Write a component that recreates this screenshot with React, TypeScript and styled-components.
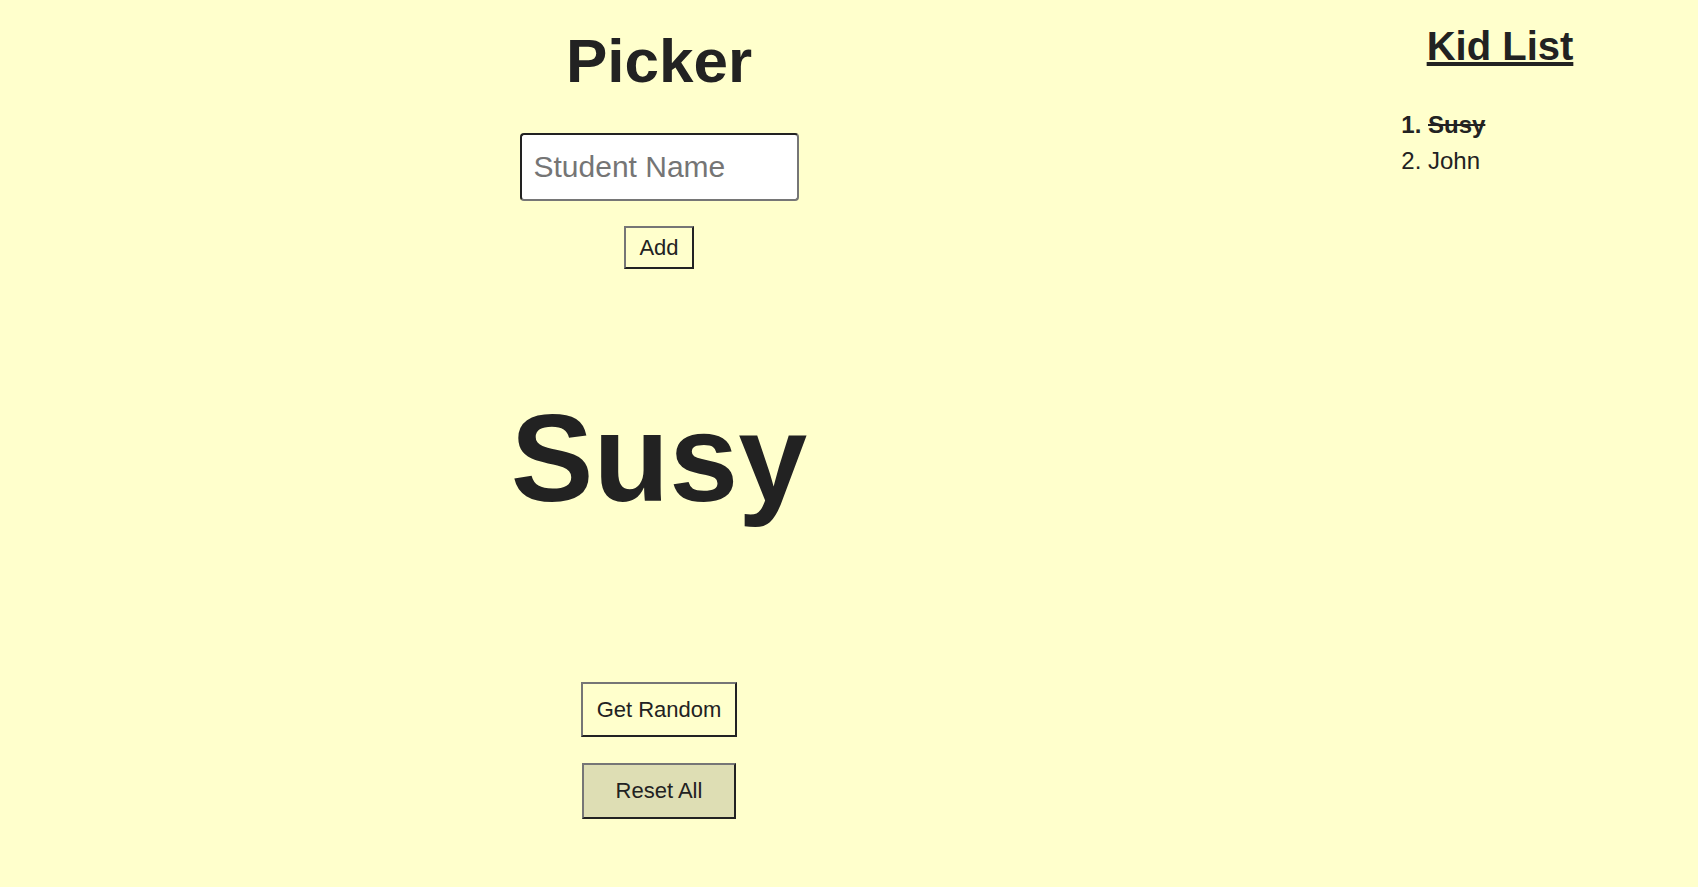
import React, { useState } from 'react';
import styled, { createGlobalStyle, css } from 'styled-components';

const GlobalStyle = createGlobalStyle`
  body {
    margin: 0;
    background: #ffffcc;
    color: #222222;
    font-family: 'Liberation Sans', Arial, sans-serif;
  }
`;

type Kid = { name: string; picked: boolean };

export default function App() {
  const [kids] = useState<Kid[]>([
    { name: 'Susy', picked: true },
    { name: 'John', picked: false },
  ]);
  const current = kids.find((k) => k.picked);

  return (
    <>
      <GlobalStyle />
      <Page>
        <PickerColumn>
          <Title>Picker</Title>
          <NameInput placeholder="Student Name" />
          <Button $size="small">Add</Button>
          <PickedName>{current ? current.name : ''}</PickedName>
          <Button $size="large">Get Random</Button>
          <Button $size="wide" $muted>
            Reset All
          </Button>
        </PickerColumn>
        <ListColumn>
          <ListTitle>Kid List</ListTitle>
          <KidList>
            {kids.map((kid) => (
              <KidItem key={kid.name} $picked={kid.picked}>
                {kid.picked ? <s>{kid.name}</s> : kid.name}
              </KidItem>
            ))}
          </KidList>
        </ListColumn>
      </Page>
    </>
  );
}

const Page = styled.main`
  display: grid;
  grid-template-columns: 1302px 1fr;
  column-gap: 8px;
  padding: 0 16px 0 8px;
  min-height: 100vh;
  box-sizing: border-box;
`;

const PickerColumn = styled.section`
  display: flex;
  flex-direction: column;
  align-items: center;
  padding-top: 25px;
`;

const Title = styled.h1`
  margin: 0;
  font-size: 62px;
  line-height: 72px;
  font-weight: bold;
`;

const NameInput = styled.input`
  margin-top: 36px;
  box-sizing: border-box;
  width: 279px;
  height: 68px;
  padding: 0 12px;
  border: 2px solid;
  border-color: #222222 #767676 #767676 #222222;
  border-radius: 4px;
  background: #ffffff;
  font-family: inherit;
  font-size: 30px;
  color: #222222;
  outline: none;

  &::placeholder {
    color: #757575;
  }
`;

const sizes = {
  small: css`
    margin-top: 25px;
    padding: 7px 13.5px;
  `,
  large: css`
    margin-top: 152px;
    padding: 13px 14px;
  `,
  wide: css`
    margin-top: 26px;
    padding: 13.5px 31.5px;
  `,
};

const Button = styled.button<{ $size: keyof typeof sizes; $muted?: boolean }>`
  font-family: inherit;
  font-size: 22px;
  line-height: 25px;
  color: #222222;
  background: ${({ $muted }) => ($muted ? '#dedeb4' : '#ffffcc')};
  border: 2px solid;
  border-color: #767676 #222222 #222222 #767676;
  border-radius: 0;
  cursor: pointer;
  ${({ $size }) => sizes[$size]}
`;

const PickedName = styled.div`
  margin-top: 118px;
  font-size: 124px;
  line-height: 1.15;
  font-weight: bold;
`;

const ListColumn = styled.aside`
  padding-top: 23px;
  text-align: center;
`;

const ListTitle = styled.h2`
  margin: 0;
  font-size: 40px;
  line-height: 46px;
  font-weight: bold;
  text-decoration: underline;
`;

const KidList = styled.ol`
  margin: 38px 0 0 0;
  padding-left: 110px;
  text-align: left;
  font-size: 24px;
  line-height: 36px;
`;

const KidItem = styled.li<{ $picked: boolean }>`
  font-weight: ${({ $picked }) => ($picked ? 'bold' : 'normal')};
`;
